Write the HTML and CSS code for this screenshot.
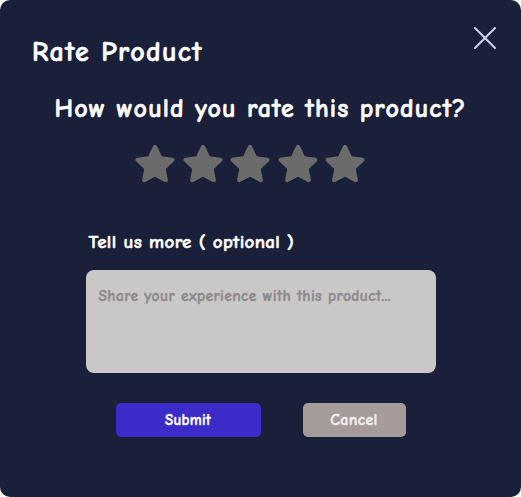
FILE: index.html
```html
<!DOCTYPE html>
<html lang="en">
<head>
<meta charset="utf-8">
<title>Rate Product</title>
<link rel="stylesheet" href="styles.css">
</head>
<body>
<div class="modal">
  <header class="modal-head">
    <h1 class="title">Rate Product</h1>
    <button class="close" aria-label="Close">
      <svg width="24" height="22" viewBox="0 0 24 22"><path d="M2 1 L22 21 M22 1 L2 21" stroke="#cdd2ec" stroke-width="2" stroke-linecap="round" fill="none"/></svg>
    </button>
  </header>
  <h2 class="question">How would you rate this product?</h2>
  <div class="stars">
    <svg class="star" viewBox="0 0 24 24"><path d="M12 1.6c.5 0 .9.3 1.1.7l2.6 5.5 6 .8c.9.1 1.3 1.2.6 1.9l-4.4 4.2 1.1 5.9c.2.9-.8 1.6-1.6 1.2L12 18.9l-5.4 2.9c-.8.4-1.8-.3-1.6-1.2l1.1-5.9L1.7 10.5c-.7-.7-.3-1.8.6-1.9l6-.8 2.6-5.5c.2-.4.6-.7 1.1-.7z"/></svg>
    <svg class="star" viewBox="0 0 24 24"><path d="M12 1.6c.5 0 .9.3 1.1.7l2.6 5.5 6 .8c.9.1 1.3 1.2.6 1.9l-4.4 4.2 1.1 5.9c.2.9-.8 1.6-1.6 1.2L12 18.9l-5.4 2.9c-.8.4-1.8-.3-1.6-1.2l1.1-5.9L1.7 10.5c-.7-.7-.3-1.8.6-1.9l6-.8 2.6-5.5c.2-.4.6-.7 1.1-.7z"/></svg>
    <svg class="star" viewBox="0 0 24 24"><path d="M12 1.6c.5 0 .9.3 1.1.7l2.6 5.5 6 .8c.9.1 1.3 1.2.6 1.9l-4.4 4.2 1.1 5.9c.2.9-.8 1.6-1.6 1.2L12 18.9l-5.4 2.9c-.8.4-1.8-.3-1.6-1.2l1.1-5.9L1.7 10.5c-.7-.7-.3-1.8.6-1.9l6-.8 2.6-5.5c.2-.4.6-.7 1.1-.7z"/></svg>
    <svg class="star" viewBox="0 0 24 24"><path d="M12 1.6c.5 0 .9.3 1.1.7l2.6 5.5 6 .8c.9.1 1.3 1.2.6 1.9l-4.4 4.2 1.1 5.9c.2.9-.8 1.6-1.6 1.2L12 18.9l-5.4 2.9c-.8.4-1.8-.3-1.6-1.2l1.1-5.9L1.7 10.5c-.7-.7-.3-1.8.6-1.9l6-.8 2.6-5.5c.2-.4.6-.7 1.1-.7z"/></svg>
    <svg class="star" viewBox="0 0 24 24"><path d="M12 1.6c.5 0 .9.3 1.1.7l2.6 5.5 6 .8c.9.1 1.3 1.2.6 1.9l-4.4 4.2 1.1 5.9c.2.9-.8 1.6-1.6 1.2L12 18.9l-5.4 2.9c-.8.4-1.8-.3-1.6-1.2l1.1-5.9L1.7 10.5c-.7-.7-.3-1.8.6-1.9l6-.8 2.6-5.5c.2-.4.6-.7 1.1-.7z"/></svg>
  </div>
  <div class="feedback">
    <label class="label" for="msg">Tell us more ( optional )</label>
    <textarea id="msg" class="textarea" placeholder="Share your experience with this product..."></textarea>
  </div>
  <div class="actions">
    <button class="btn btn-submit">Submit</button>
    <button class="btn btn-cancel">Cancel</button>
  </div>
</div>
</body>
</html>
```

FILE: styles.css
```css
html, body {
  margin: 0;
  padding: 0;
  background: #ffffff;
}
body {
  font-family: "Comic Neue", "Comic Sans MS", "Noto Sans", sans-serif;
}
.modal {
  width: 521px;
  height: 497px;
  box-sizing: border-box;
  background: #1a203a;
  border-radius: 10px;
  display: flex;
  flex-direction: column;
  align-items: center;
  color: #ffffff;
}
.modal-head {
  width: 100%;
  box-sizing: border-box;
  display: flex;
  justify-content: space-between;
  align-items: flex-start;
  padding: 35px 24px 0 32px;
}
.title {
  margin: 0;
  font-size: 28px;
  font-weight: 700;
  line-height: 34px;
  letter-spacing: 1.3px;
  -webkit-text-stroke: 0.6px currentColor;
}
.close {
  background: none;
  border: none;
  padding: 0;
  margin-top: -8px;
  width: 24px;
  height: 22px;
  cursor: pointer;
}
.question {
  margin: 24px 0 0;
  font-size: 26px;
  font-weight: 700;
  line-height: 32px;
  letter-spacing: 1.1px;
  -webkit-text-stroke: 0.6px currentColor;
}
.stars {
  display: flex;
  gap: 3.5px;
  margin-top: 17px;
  margin-right: 21px;
}
.star {
  width: 44px;
  height: 44px;
  fill: #6b6b6b;
}
.feedback {
  display: flex;
  flex-direction: column;
  width: 350px;
  margin-top: 45px;
}
.label {
  font-size: 19px;
  font-weight: 700;
  line-height: 22px;
  letter-spacing: 0.3px;
  padding-left: 3px;
  -webkit-text-stroke: 0.5px currentColor;
}
.textarea {
  margin-top: 17px;
  height: 103px;
  box-sizing: border-box;
  border: none;
  border-radius: 8px;
  background: #c9c7c8;
  padding: 17px 13px;
  font-family: inherit;
  font-size: 15.5px;
  font-weight: 700;
  letter-spacing: 0.4px;
  resize: none;
  outline: none;
  color: #333;
  -webkit-text-stroke: 0.4px currentColor;
}
.textarea::placeholder {
  color: #8c8a8b;
  -webkit-text-stroke: 0.4px #8c8a8b;
}
.actions {
  display: flex;
  gap: 42px;
  margin-top: 30px;
}
.btn {
  height: 34px;
  border: none;
  border-radius: 5px;
  font-family: inherit;
  font-weight: 700;
  font-size: 15px;
  letter-spacing: 0.3px;
  color: #ffffff;
  cursor: pointer;
  -webkit-text-stroke: 0.4px currentColor;
}
.btn-submit {
  width: 145px;
  background: #3b2bc8;
}
.btn-cancel {
  width: 103px;
  background: #a69b9b;
  font-size: 16px;
  color: #f4f0f0;
}
```
